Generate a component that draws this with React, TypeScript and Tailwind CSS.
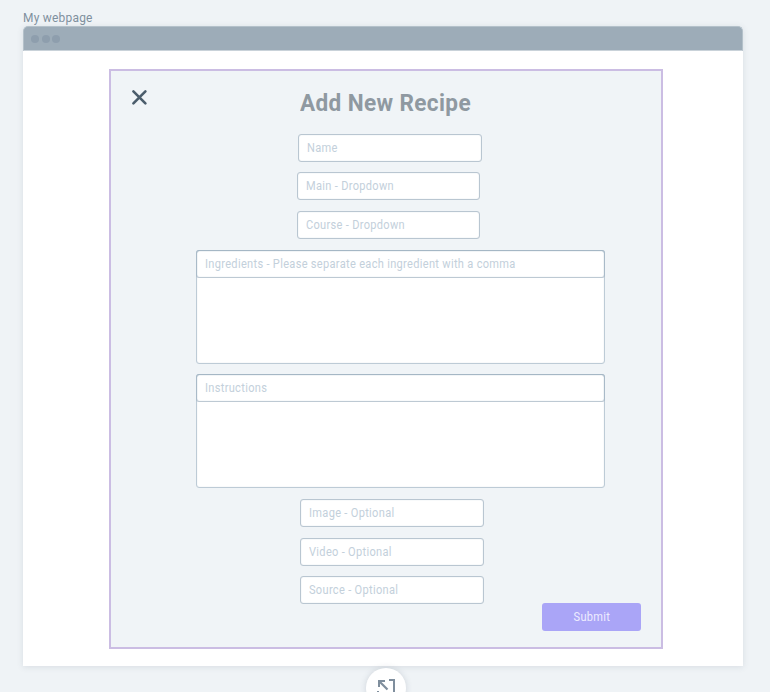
import React from "react";

type FieldProps = { label: string; className: string };

function Label({ text }: { text: string }) {
  return <span className="inline-block origin-left scale-x-[0.92] tracking-[0.34px] whitespace-pre">{text}</span>;
}

function Field({ label, className }: FieldProps) {
  return (
    <div
      className={`flex h-7 shrink-0 items-center rounded-[3px] border border-[#b9c6d1] bg-white pl-2 text-[12px] leading-[14px] text-[#c3d0db] shadow-[inset_0_0_1px_#b9c6d1] ${className}`}
    >
      <Label text={label} />
    </div>
  );
}

function TextArea({ label, className }: FieldProps) {
  return (
    <div
      className={`ml-[85px] h-[114px] w-[409px] shrink-0 rounded-[3px] border border-[#bdcbd6] bg-white shadow-[inset_0_0_1px_#bdcbd6] ${className}`}
    >
      <div className="-mx-px -mt-px flex h-7 items-center rounded-[3px] border border-[#bdc9d3] border-x-[#a9bac8] border-t-[#a5b7c5] pl-2 text-[12px] leading-[14px] text-[#c3d0db] shadow-[inset_0_0_1px_#b9c6d1]">
        <Label text={label} />
      </div>
    </div>
  );
}

export default function App() {
  return (
    <div className="relative h-[692px] w-[770px] overflow-hidden bg-[#eff3f6] pt-[10px] pl-[23px] font-['Roboto','Liberation_Sans',sans-serif]">
      <div className="h-4 text-[13px] leading-4 text-[#7f909e]">
        <span className="inline-block origin-left scale-x-[0.92] tracking-[0.25px] whitespace-pre">My webpage</span>
      </div>
      <div className="flex h-[640px] w-[720px] flex-col rounded-t-[5px] bg-white shadow-[0_1px_6px_rgba(60,80,100,0.13)]">
        <div className="flex h-[25px] shrink-0 items-center gap-[2.6px] rounded-t-[5px] border border-[#b4c1ca] border-b-[#c9d2d9] bg-[#9dacb8] pl-[7px]">
          <i className="size-2 rounded-full bg-[#8e9ead]" />
          <i className="size-2 rounded-full bg-[#8e9ead]" />
          <i className="size-2 rounded-full bg-[#8e9ead]" />
        </div>
        <div className="mt-[18px] ml-[86px] flex h-[580px] w-[554px] shrink-0 flex-col border-2 border-[#cbbde3] bg-[#f0f4f7]">
          <div className="flex h-[63px] shrink-0 pt-[16px]">
            <svg className="mt-px ml-[19px] size-[18px] shrink-0" viewBox="0 0 18 18" fill="none" stroke="#4b5d6c" strokeWidth="2.6" strokeLinecap="round">
              <path d="M3.4 3.4L15.4 15.4M15.4 3.4L3.4 15.4" />
            </svg>
            <h1 className="ml-[151.5px] origin-left scale-x-[0.94] text-[24px] leading-[32px] font-bold tracking-[0.4px] whitespace-pre text-[#8f99a1]">Add New Recipe</h1>
          </div>
          <Field label="Name" className="ml-[187px] w-[184px]" />
          <Field label="Main - Dropdown" className="mt-[10px] ml-[186px] w-[183px]" />
          <Field label="Course - Dropdown" className="mt-[11px] ml-[186px] w-[183px]" />
          <TextArea label="Ingredients - Please separate each ingredient with a comma" className="mt-[11px]" />
          <TextArea label="Instructions" className="mt-[10px]" />
          <Field label="Image - Optional" className="mt-[11px] ml-[189px] w-[184px]" />
          <Field label="Video - Optional" className="mt-[11px] ml-[189px] w-[184px]" />
          <Field label="Source - Optional" className="mt-[10px] ml-[189px] w-[184px]" />
          <button className="-mt-px ml-[431px] h-7 w-[99px] shrink-0 rounded-[3px] bg-[#aaa5f7] text-[12px] leading-[28px] text-[#eeecff]">
            <span className="inline-block scale-x-[0.92] tracking-[0.34px]">Submit</span>
          </button>
        </div>
      </div>
      <div className="absolute top-[668px] left-[366px] size-10 rounded-full bg-white shadow-[0_0_6px_rgba(60,80,100,0.18)]">
        <svg className="size-10" viewBox="0 0 40 40" fill="none" stroke="#7f8e9d" strokeWidth="2">
          <path d="M23 12H28V28H12V23" />
          <path d="M13 19V13H19" />
          <path d="M13 13L21.5 21.5" strokeWidth="2.2" />
        </svg>
      </div>
    </div>
  );
}
